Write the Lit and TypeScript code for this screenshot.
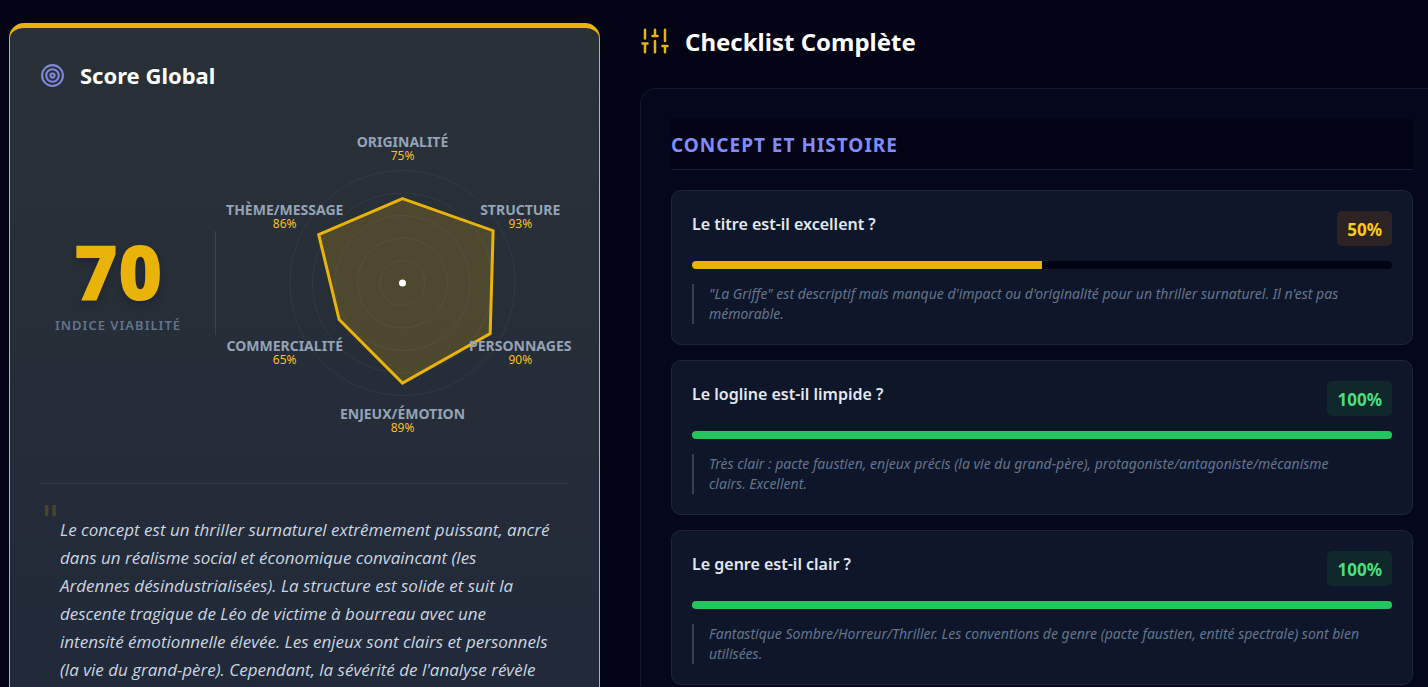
import { LitElement, html, svg, css } from "lit";
import { customElement, property } from "lit/decorators.js";

interface Axis {
  label: string;
  value: number;
}

interface Question {
  title: string;
  score: number;
  note: string;
}

const AXES: Axis[] = [
  { label: "ORIGINALITÉ", value: 75 },
  { label: "STRUCTURE", value: 93 },
  { label: "PERSONNAGES", value: 90 },
  { label: "ENJEUX/ÉMOTION", value: 89 },
  { label: "COMMERCIALITÉ", value: 65 },
  { label: "THÈME/MESSAGE", value: 86 },
];

const QUESTIONS: Question[] = [
  {
    title: "Le titre est-il excellent ?",
    score: 50,
    note: "\"La Griffe\" est descriptif mais manque d'impact ou d'originalité pour un thriller surnaturel. Il n'est pas mémorable.",
  },
  {
    title: "Le logline est-il limpide ?",
    score: 100,
    note: "Très clair : pacte faustien, enjeux précis (la vie du grand-père), protagoniste/antagoniste/mécanisme clairs. Excellent.",
  },
  {
    title: "Le genre est-il clair ?",
    score: 100,
    note: "Fantastique Sombre/Horreur/Thriller. Les conventions de genre (pacte faustien, entité spectrale) sont bien utilisées.",
  },
];

/** Radar chart: one spoke per axis, starting at twelve o'clock. */
@customElement("radar-chart")
export class RadarChart extends LitElement {
  @property({ attribute: false }) axes: Axis[] = [];

  static styles = css`
    :host {
      display: block;
    }
    .chart {
      display: block;
      width: 100%;
      height: 300px;
      overflow: visible;
    }
    .ring {
      fill: none;
      stroke: rgba(255, 255, 255, 0.05);
    }
    .area {
      fill: rgba(234, 179, 8, 0.2);
      stroke: #eab308;
      stroke-width: 3;
    }
    .center {
      fill: #fff;
    }
    .name {
      fill: #94a3b8;
      font-size: 14px;
      font-weight: 700;
      text-anchor: middle;
    }
    .value {
      fill: #fbbf24;
      font-size: 12px;
      text-anchor: middle;
    }
  `;

  private at(index: number, radius: number) {
    const angle = (index / this.axes.length) * 2 * Math.PI - Math.PI / 2;
    return { x: 150 + radius * Math.cos(angle), y: 150 + radius * Math.sin(angle) };
  }

  render() {
    const full = 112.5;
    const points = this.axes
      .map((a, i) => this.at(i, (full * a.value) / 100))
      .map((p) => `${p.x.toFixed(2)},${p.y.toFixed(2)}`)
      .join(" ");
    return html`
      <svg class="chart" viewBox="0 0 300 300" role="img" aria-label="Score par critère">
        ${[0.2, 0.4, 0.6, 0.8, 1].map(
          (k) => svg`<circle class="ring" cx="150" cy="150" r=${full * k}></circle>`
        )}
        <polygon class="area" points=${points}></polygon>
        <circle class="center" cx="150" cy="150" r="3.5"></circle>
        ${this.axes.map((a, i) => {
          const p = this.at(i, 136);
          return svg`
            <text class="name" x=${p.x} y=${p.y}>${a.label}</text>
            <text class="value" x=${p.x} y=${p.y + 13}>${a.value}%</text>`;
        })}
      </svg>
    `;
  }
}

@customElement("check-item")
export class CheckItem extends LitElement {
  @property({ attribute: false }) item!: Question;

  static styles = css`
    :host {
      display: block;
    }
    .card {
      padding: 20px;
      border: 1px solid #1e2638;
      border-radius: 10px;
      background: #0e1729;
    }
    .head {
      display: flex;
      justify-content: space-between;
      align-items: flex-start;
      gap: 15px;
    }
    .title {
      margin: 0;
      font-size: 16px;
      line-height: 26px;
      font-weight: 600;
      color: #e2e8f0;
    }
    .badge {
      padding: 2px 10px 0;
      border-radius: 5px;
      font-size: 17px;
      line-height: 33px;
      font-weight: 700;
    }
    .good {
      background: #10272b;
      color: #4ade80;
    }
    .fair {
      background: #2d2224;
      color: #facc15;
    }
    .track {
      height: 8px;
      margin: 15px 0;
      border-radius: 4px;
      background: #020412;
      overflow: hidden;
    }
    .fill {
      height: 100%;
      background: #22c55e;
    }
    .fill.mid {
      background: #eab308;
    }
    .note {
      margin: 0;
      padding: 0 28px 0 15px;
      border-left: 2px solid #334155;
      font-size: 14px;
      line-height: 20px;
      font-style: italic;
      color: #64748b;
    }
  `;

  render() {
    const { title, score, note } = this.item;
    const mid = score < 75;
    return html`
      <article class="card">
        <div class="head">
          <h4 class="title">${title}</h4>
          <span class="badge ${mid ? "fair" : "good"}">${score}%</span>
        </div>
        <div
          class="track"
          role="progressbar"
          aria-label=${title}
          aria-valuemin="0"
          aria-valuemax="100"
          aria-valuenow=${score}
        >
          <div class="fill ${mid ? "mid" : ""}" style="width:${score}%"></div>
        </div>
        <p class="note">${note}</p>
      </article>
    `;
  }
}

@customElement("app-root")
export class AppRoot extends LitElement {
  static styles = css`
    :host {
      display: block;
      height: 100vh;
      overflow: hidden;
      background: #020314;
      color: #fff;
      font-family: "Noto Sans", "Open Sans", sans-serif;
    }
    .page {
      display: grid;
      grid-template-columns: minmax(0, 591fr) minmax(0, 804fr);
      gap: 40px;
      min-height: 100%;
      box-sizing: border-box;
      margin-right: -16px;
      padding: 23px 0 0 9px;
    }
    .score {
      box-sizing: border-box;
      min-height: 720px;
      padding: 30px;
      border: 1px solid #eab308;
      border-top-width: 5px;
      border-radius: 15px;
      background: linear-gradient(180deg, #293137, #262e38 40%, #202938);
    }
    .heading {
      display: flex;
      align-items: center;
      gap: 15px;
    }
    .heading svg {
      display: block;
      flex: none;
      fill: none;
      stroke-width: 2;
      stroke-linecap: round;
      stroke-linejoin: round;
    }
    .target {
      stroke: #7f88dc;
    }
    .sliders {
      stroke: #eab308;
    }
    .title {
      margin: 0;
      font-size: 22px;
      line-height: 35px;
      font-weight: 700;
    }
    .title.large {
      padding-top: 2px;
      font-size: 24px;
      line-height: 33px;
    }
    .overview {
      display: flex;
      align-items: center;
      margin: 40px 0 50px;
    }
    .index {
      display: flex;
      flex-direction: column;
      align-items: center;
      flex: 0 0 156px;
      padding-right: 19px;
      border-right: 1px solid #3b434d;
    }
    .number {
      font-size: 76px;
      line-height: 80px;
      font-weight: 900;
      color: #eab308;
      text-shadow: 0 4px 10px rgba(0, 0, 0, 0.2);
    }
    .caption {
      padding-top: 4px;
      font-size: 13px;
      line-height: 20px;
      font-weight: 600;
      letter-spacing: 1px;
      white-space: nowrap;
      color: #64748b;
    }
    .radar {
      flex: 1;
      min-width: 0;
      margin-left: 20px;
    }
    .summary {
      position: relative;
      margin: 0;
      padding: 32px 16px 0 20px;
      border-top: 1px solid #343c47;
      font-family: "Open Sans", "Noto Sans", sans-serif;
      font-size: 17px;
      line-height: 28px;
      font-style: italic;
      color: #cbd5e1;
    }
    .mark {
      position: absolute;
      top: 17px;
      left: 1px;
      font-family: "DejaVu Sans", sans-serif;
      font-size: 40px;
      line-height: 40px;
      font-style: normal;
      color: rgba(234, 179, 8, 0.2);
    }
    .checklist {
      display: flex;
      flex-direction: column;
      gap: 30px;
    }
    .panel {
      flex: 1;
      padding: 30px;
      border: 1px solid #121828;
      border-radius: 15px;
      background: #04081a;
    }
    .section {
      margin: 0 0 20px;
      padding-top: 2px;
      border-bottom: 1px solid #1a2030;
      background: #020314;
      font-size: 19px;
      line-height: 48px;
      font-weight: 700;
      letter-spacing: 1px;
      text-transform: uppercase;
      color: #818cf8;
    }
    .items {
      display: flex;
      flex-direction: column;
      gap: 15px;
    }
  `;

  render() {
    return html`
      <main class="page">
        <section class="score">
          <header class="heading">
            <svg class="target" width="25" height="25" viewBox="0 0 24 24" aria-hidden="true">
              <circle cx="12" cy="12" r="10"></circle>
              <circle cx="12" cy="12" r="6"></circle>
              <circle cx="12" cy="12" r="2"></circle>
            </svg>
            <h2 class="title">Score Global</h2>
          </header>
          <div class="overview">
            <div class="index">
              <span class="number">70</span>
              <span class="caption">INDICE VIABILITÉ</span>
            </div>
            <radar-chart class="radar" .axes=${AXES}></radar-chart>
          </div>
          <blockquote class="summary">
            <span class="mark" aria-hidden="true">"</span>
            Le concept est un thriller surnaturel extrêmement puissant, ancré dans un réalisme
            social et économique convaincant (les<br />Ardennes désindustrialisées). La structure
            est solide et suit la descente tragique de Léo de victime à bourreau avec une intensité
            émotionnelle élevée. Les enjeux sont clairs et personnels (la vie du grand-père).
            Cependant, la sévérité de l'analyse révèle
          </blockquote>
        </section>
        <section class="checklist">
          <header class="heading">
            <svg class="sliders" width="30" height="30" viewBox="0 0 24 24" aria-hidden="true">
              <path
                d="M4 21v-7M4 10V3M12 21v-9M12 8V3M20 21v-5M20 12V3M2 14h4M10 8h4M18 16h4"
              ></path>
            </svg>
            <h2 class="title large">Checklist Complète</h2>
          </header>
          <div class="panel">
            <h3 class="section">Concept et histoire</h3>
            <div class="items">
              ${QUESTIONS.map((q) => html`<check-item .item=${q}></check-item>`)}
            </div>
          </div>
        </section>
      </main>
    `;
  }
}
